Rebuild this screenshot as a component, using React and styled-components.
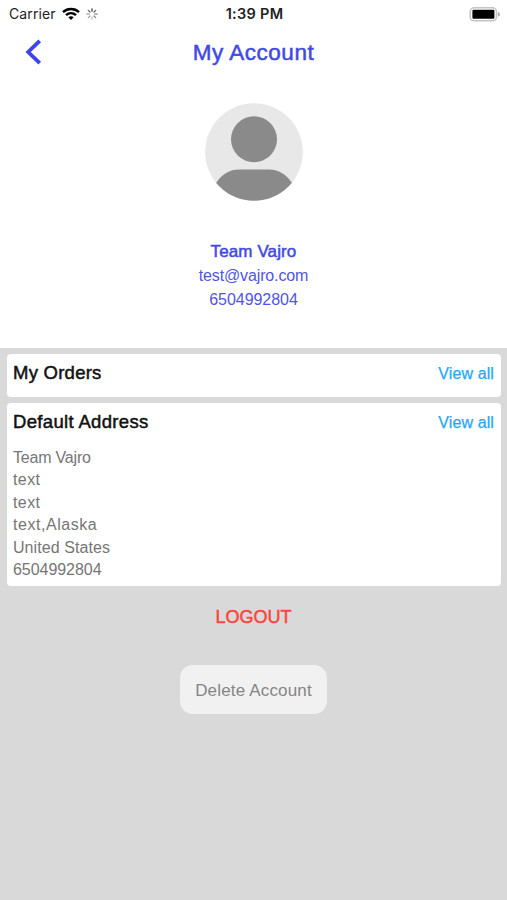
import React from "react";
import styled, { createGlobalStyle } from "styled-components";

const Global = createGlobalStyle`
  *, *::before, *::after { box-sizing: border-box; }
  body { margin: 0; background: #d9d9d9; font-family: "Liberation Sans", Arial, sans-serif; }
  button { font: inherit; border: 0; padding: 0; background: none; }
  h1, h2, p { margin: 0; }
`;

const Screen = styled.main`
  display: flex;
  flex-direction: column;
  height: 900px;
  overflow: hidden;
  background: #d9d9d9;
`;

const Top = styled.section`
  height: 348px;
  flex: none;
  background: #fff;
`;

const StatusBar = styled.div`
  display: grid;
  grid-template-columns: 1fr auto 1fr;
  align-items: center;
  height: 28px;
  padding: 0 7px 0 9px;
  font-family: Inter, sans-serif;
  font-size: 14px;
  line-height: 28px;
  color: #222;
`;

const Carrier = styled.div`
  display: flex;
  align-items: center;
  gap: 6px;
  letter-spacing: 0.1px;
  svg { flex: none; }
`;

const Clock = styled.div`
  font-size: 14.5px;
  font-weight: 600;
  letter-spacing: 0.3px;
`;

const Battery = styled.svg`
  justify-self: end;
`;

const NavBar = styled.header`
  display: grid;
  grid-template-columns: 60px 1fr 60px;
  align-items: center;
  height: 48px;
`;

const BackButton = styled.button`
  display: flex;
  padding-left: 24px;
`;

const Title = styled.h1`
  padding-top: 2px;
  text-align: center;
  font-size: 22.5px;
  line-height: 46px;
  font-weight: 400;
  letter-spacing: 0.5px;
  color: #4148e4;
  -webkit-text-stroke: 0.5px #4148e4;
`;

const Profile = styled.div`
  display: flex;
  flex-direction: column;
  align-items: center;
  padding-top: 27px;
`;

const Details = styled.div`
  margin-top: 38px;
  text-align: center;
  color: #4f55e2;
`;

const Detail = styled.p`
  font-size: 16px;
  line-height: 24px;
  letter-spacing: ${(p) => p.$spacing || "0"};
`;

const Name = styled(Detail)`
  font-size: 17px;
  line-height: 25px;
  color: #4148e4;
  -webkit-text-stroke: 0.5px #4148e4;
`;

const Body = styled.section`
  display: flex;
  flex-direction: column;
  gap: 6px;
  padding: 6px 6px 0 7px;
`;

const Card = styled.article`
  height: ${(p) => p.$height};
  padding: 0 7px 0 6px;
  border-radius: 4px;
  background: #fff;
`;

const CardHeader = styled.div`
  display: flex;
  align-items: center;
  justify-content: space-between;
  height: 39px;
`;

const CardTitle = styled.h2`
  padding-bottom: 1px;
  font-size: 18.5px;
  font-weight: 400;
  letter-spacing: ${(p) => p.$spacing};
  color: #111;
  -webkit-text-stroke: 0.5px #111;
`;

const ViewAll = styled.button`
  font-size: 16px;
  letter-spacing: 0.1px;
  color: #25a8f3;
  -webkit-text-stroke: 0.25px #25a8f3;
`;

const Address = styled.div`
  padding-top: 5px;
  font-size: 16px;
  line-height: 22.4px;
  color: #767676;
`;

const AddressLine = styled.p`
  letter-spacing: ${(p) => p.$spacing || "0"};
`;

const Actions = styled.div`
  display: flex;
  flex-direction: column;
  align-items: center;
`;

const Logout = styled.button`
  height: 24px;
  margin-top: 19px;
  font-size: 18px;
  color: #f94640;
  -webkit-text-stroke: 0.5px #f94640;
`;

const DeleteButton = styled.button`
  width: 147px;
  height: 49px;
  margin-top: 36px;
  padding-top: 2px;
  border-radius: 13px;
  background: #f1f1f1;
  font-size: 17px;
  letter-spacing: 0.17px;
  color: #858585;
`;

const SPOKES = [1, 0.8, 0.75, 0.6, 0.3, 0.45, 0.6, 0.75];

function Wifi() {
  return (
    <svg width="18" height="14" viewBox="0 0 18 14" fill="none" stroke="#000" strokeWidth="2.5">
      <path d="M1 5.1C5.5.9 12.5.9 17 5.1" />
      <path d="M4 8.2c2.9-2.7 7.1-2.7 10 0" />
      <path d="M6.3 10.3Q9 8.1 11.7 10.3L9 13z" fill="#000" stroke="none" />
    </svg>
  );
}

function Spinner() {
  return (
    <svg width="12" height="12" viewBox="-6 -6 12 12" stroke="#333" strokeWidth="1.2" strokeLinecap="round">
      {SPOKES.map((o, i) => (
        <path key={i} d="M0-2.8V-5.2" opacity={o} transform={`rotate(${i * 45})`} />
      ))}
    </svg>
  );
}

function Avatar() {
  return (
    <svg width="98" height="98" viewBox="0 0 98 98">
      <defs>
        <clipPath id="avatar"><circle cx="49" cy="49" r="48.8" /></clipPath>
      </defs>
      <circle cx="49" cy="49" r="48.8" fill="#e8e8e8" />
      <g clipPath="url(#avatar)" fill="#8a8a8a">
        <circle cx="49" cy="36.3" r="23" />
        <path d="M11 80Q20 66.5 34 66.5H64Q78 66.5 87 80V98H11z" />
      </g>
    </svg>
  );
}

export default function App() {
  return (
    <Screen>
      <Global />
      <Top>
        <StatusBar>
          <Carrier>
            <span>Carrier</span>
            <Wifi />
            <Spinner />
          </Carrier>
          <Clock>1:39 PM</Clock>
          <Battery width="31" height="15" viewBox="0 0 31 15">
            <rect x="1.2" y=".8" width="26.3" height="13" rx="4" fill="#fff" stroke="#c4c4c4" strokeWidth="1.6" />
            <rect x="3.4" y="2.8" width="22" height="9" rx="1.2" fill="#000" />
            <path d="M29 5v4.8q2-.9 2-2.4T29 5z" fill="#aaa" />
          </Battery>
        </StatusBar>
        <NavBar>
          <BackButton aria-label="Back">
            <svg width="18" height="26" viewBox="0 0 18 26" fill="none" stroke="#3b45ea" strokeWidth="3.8">
              <path d="M15.7 1.8L4.2 13 15.7 24.2" />
            </svg>
          </BackButton>
          <Title>My Account</Title>
        </NavBar>
        <Profile>
          <Avatar />
          <Details>
            <Name $spacing="0.12px">Team Vajro</Name>
            <Detail $spacing="-0.14px">test@vajro.com</Detail>
            <Detail $spacing="-0.05px">6504992804</Detail>
          </Details>
        </Profile>
      </Top>
      <Body>
        <Card $height="43px">
          <CardHeader>
            <CardTitle $spacing="0.25px">My Orders</CardTitle>
            <ViewAll>View all</ViewAll>
          </CardHeader>
        </Card>
        <Card $height="183px">
          <CardHeader>
            <CardTitle $spacing="0.33px">Default Address</CardTitle>
            <ViewAll>View all</ViewAll>
          </CardHeader>
          <Address>
            <AddressLine $spacing="-0.2px">Team Vajro</AddressLine>
            <AddressLine $spacing="0.4px">text</AddressLine>
            <AddressLine $spacing="0.4px">text</AddressLine>
            <AddressLine $spacing="0.55px">text,Alaska</AddressLine>
            <AddressLine $spacing="0.07px">United States</AddressLine>
            <AddressLine $spacing="-0.05px">6504992804</AddressLine>
          </Address>
        </Card>
      </Body>
      <Actions>
        <Logout>LOGOUT</Logout>
        <DeleteButton>Delete Account</DeleteButton>
      </Actions>
    </Screen>
  );
}
